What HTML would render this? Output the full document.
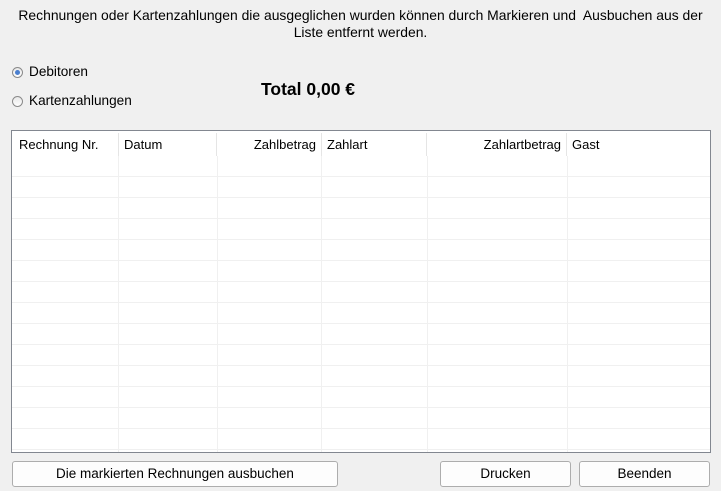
<!DOCTYPE html>
<html><head><style>
body{margin:0;width:721px;height:491px;background:#f0f0f0;font-family:"Liberation Sans",sans-serif;font-size:13px;color:#000;position:relative;overflow:hidden}
.a{position:absolute}
.top{left:0;width:721px;top:7px;text-align:center;line-height:17px;font-size:13.9px}
.radio{width:11px;height:11px;border-radius:50%;border:1px solid #8a8a8a;background:linear-gradient(#e8e8e8,#fff);box-sizing:border-box}
.sel::after{content:"";position:absolute;left:2px;top:2px;width:5px;height:5px;border-radius:50%;background:#4a7fcf}
.tbl{left:11px;top:130px;width:700px;height:323px;border:1px solid #828790;box-sizing:border-box;background:#fff;overflow:hidden}
.hl{position:absolute;left:0;right:0;height:1px;background:#f0f0f0}
.vl{position:absolute;width:1px;background:#f0f0f0;top:25px;bottom:0}
.hs{position:absolute;width:1px;background:#e5e5e5;top:2px;height:23px}
.h{position:absolute;top:6px}
.btn{border:1px solid #adadad;border-radius:3px;background:#fdfdfd;box-sizing:border-box;height:26px;top:461px;text-align:center;line-height:24px;font-size:13.5px}
</style></head><body>
<div class="a top">Rechnungen oder Kartenzahlungen die ausgeglichen wurden können durch Markieren und&nbsp; Ausbuchen aus der<br>Liste entfernt werden.</div>
<div class="a radio sel" style="left:12px;top:67px"></div>
<div class="a" style="left:29px;top:64px;font-size:13.6px">Debitoren</div>
<div class="a radio" style="left:12px;top:96px"></div>
<div class="a" style="left:29px;top:93px;font-size:13.6px">Kartenzahlungen</div>
<div class="a" style="left:261px;top:79px;font-weight:bold;font-size:17.5px">Total 0,00 €</div>
<div class="a tbl">
<div class="hs" style="left:106px"></div><div class="hs" style="left:204px"></div><div class="hs" style="left:309px"></div><div class="hs" style="left:414px"></div><div class="hs" style="left:554px"></div>
<div class="vl" style="left:106px"></div><div class="vl" style="left:205px"></div><div class="vl" style="left:309px"></div><div class="vl" style="left:415px"></div><div class="vl" style="left:555px"></div>
<div class="h" style="left:7px">Rechnung Nr.</div>
<div class="h" style="left:112px">Datum</div>
<div class="h" style="left:204px;width:100px;text-align:right">Zahlbetrag</div>
<div class="h" style="left:315px">Zahlart</div>
<div class="h" style="left:414px;width:135px;text-align:right">Zahlartbetrag</div>
<div class="h" style="left:560px">Gast</div>
<div class="hl" style="top:45px"></div><div class="hl" style="top:66px"></div><div class="hl" style="top:87px"></div><div class="hl" style="top:108px"></div><div class="hl" style="top:129px"></div><div class="hl" style="top:150px"></div><div class="hl" style="top:171px"></div><div class="hl" style="top:192px"></div><div class="hl" style="top:213px"></div><div class="hl" style="top:234px"></div><div class="hl" style="top:255px"></div><div class="hl" style="top:276px"></div><div class="hl" style="top:297px"></div><div class="hl" style="top:318px"></div>
</div>
<div class="a btn" style="left:12px;width:326px">Die markierten Rechnungen ausbuchen</div>
<div class="a btn" style="left:440px;width:131px">Drucken</div>
<div class="a btn" style="left:579px;width:131px">Beenden</div>
</body></html>
